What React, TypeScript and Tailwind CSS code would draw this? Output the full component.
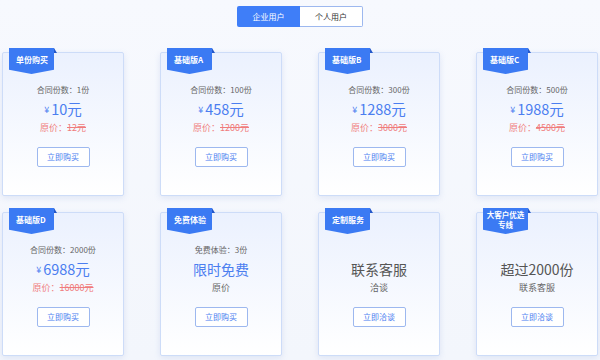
import React from "react";

type Plan = {
  badge: string[];
  line1?: string;
  price?: string;
  big?: string;
  bigBlue?: boolean;
  orig?: string;
  sub?: string;
  action: string;
};

const PLANS: Plan[] = [
  { badge: ["单份购买"], line1: "合同份数：1份", price: "10", orig: "12元", action: "立即购买" },
  { badge: ["基础版A"], line1: "合同份数：100份", price: "458", orig: "1200元", action: "立即购买" },
  { badge: ["基础版B"], line1: "合同份数：300份", price: "1288", orig: "3000元", action: "立即购买" },
  { badge: ["基础版C"], line1: "合同份数：500份", price: "1988", orig: "4500元", action: "立即购买" },
  { badge: ["基础版D"], line1: "合同份数：2000份", price: "6988", orig: "16000元", action: "立即购买" },
  { badge: ["免费体验"], line1: "免费体验：3份", big: "限时免费", bigBlue: true, sub: "原价", action: "立即购买" },
  { badge: ["定制服务"], big: "联系客服", sub: "洽谈", action: "立即洽谈" },
  { badge: ["大客户优选", "专线"], big: "超过2000份", sub: "联系客服", action: "立即洽谈" },
];

function Badge({ lines }: { lines: string[] }) {
  const two = lines.length > 1;
  return (
    <div className="absolute left-[6px] top-[-5px] flex">
      <div
        className={`w-[45px] h-[26px] bg-[#3b7af3] text-white font-bold flex flex-col justify-center [clip-path:polygon(0_0,100%_0,100%_84%,50%_100%,0_84%)] ${two ? "items-center text-[7.5px] leading-[10px] pb-[3px]" : "pl-[7px] text-[8px] pt-[1px] pb-[3px]"}`}
      >
        {lines.map((l) => (
          <span key={l}>{l}</span>
        ))}
      </div>
      <div className="w-[3px] h-[5px] bg-[#2458c9] [clip-path:polygon(0_0,100%_100%,0_100%)]" />
    </div>
  );
}

function Card({ p }: { p: Plan }) {
  return (
    <div className="relative h-[144px] rounded-[2px] border border-[#cddcf8] bg-gradient-to-b from-[#ebf1fe] to-white shadow-[0_2px_6px_rgba(120,150,210,0.18)] flex flex-col items-center">
      <Badge lines={p.badge} />
      <div className="h-[29px]" />
      <div className="h-[16px] flex items-center text-[8px] text-[#666]">{p.line1 ?? ""}</div>
      {p.price ? (
        <div className="h-[22px] flex items-center text-[#4b7ef0]">
          <span className="text-[9px] mr-[2px] mt-[2px]">¥</span>
          <span className="text-[14.5px]">{p.price}元</span>
        </div>
      ) : (
        <div className={`h-[22px] flex items-center text-[14px] ${p.bigBlue ? "text-[#4b7ef0]" : "text-[#555]"}`}>{p.big}</div>
      )}
      {p.orig ? (
        <div className="h-[16px] flex items-center text-[9px] text-[#f07c7c]">
          原价：<span className="line-through">{p.orig}</span>
        </div>
      ) : (
        <div className="h-[16px] flex items-center text-[9px] text-[#666]">{p.sub}</div>
      )}
      <button className="mt-[11px] w-[53px] h-[20px] rounded-[2px] border border-[#9db8ef] bg-white text-[8px] text-[#4b7ef0]">
        {p.action}
      </button>
    </div>
  );
}

export default function App() {
  return (
    <div
      className="w-[600px] h-[360px] overflow-hidden bg-gradient-to-b from-[#f7f9fe] to-[#f3f6fc]"
      style={{ fontFamily: '"Noto Sans CJK SC", "Noto Sans", sans-serif' }}
    >
      <div className="pt-[6px] flex justify-center">
        <div className="flex">
          <button className="w-[63px] h-[21px] bg-[#3f7ef8] text-white text-[8px] rounded-l-[2px]">企业用户</button>
          <button className="w-[63px] h-[21px] bg-white text-[#333] text-[8px] border border-[#9db8ef] border-l-0 rounded-r-[2px]">个人用户</button>
        </div>
      </div>
      <div className="mt-[25px] px-[2px] grid grid-cols-4 gap-x-[36px] gap-y-[16px]">
        {PLANS.map((p) => (
          <Card key={p.badge.join("")} p={p} />
        ))}
      </div>
    </div>
  );
}
